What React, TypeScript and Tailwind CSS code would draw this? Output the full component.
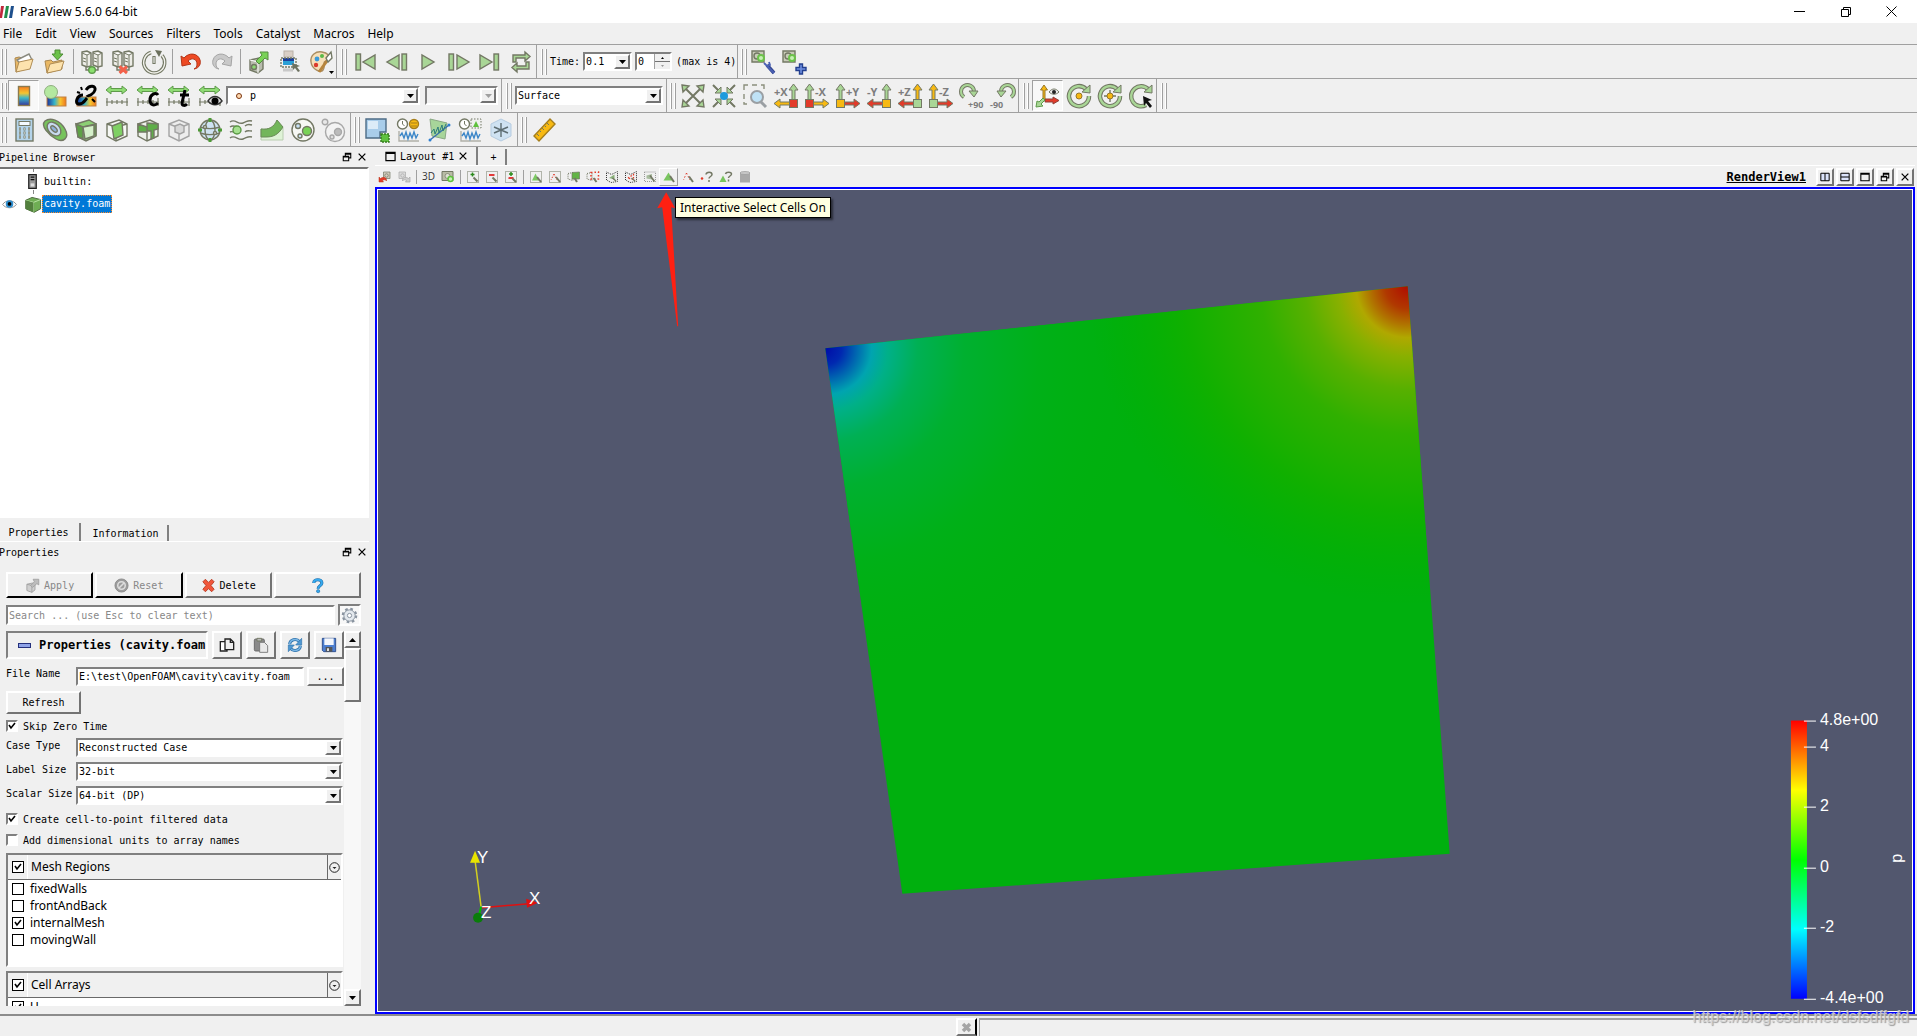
// src/App.tsx
import React from 'react';

const G = '#a9d696';
const S = '#737864';
const R = '#e23b2a';
const Y = '#f7b912';

const sunken =
  'border-2 border-t-[#808080] border-l-[#808080] border-b-white border-r-white';
const raised =
  'border-2 border-t-white border-l-white border-b-[#737373] border-r-[#737373] bg-[#f0f0f0]';
const mono = "font-['DejaVu_Sans_Mono',monospace] text-[10px]";

const Svg = ({
  children,
  size = 24,
}: {
  children: React.ReactNode;
  size?: number;
}) => (
  <svg
    width={size}
    height={size}
    viewBox="0 0 24 24"
    fill="none"
    stroke={S}
    strokeWidth="1.4"
    className="block shrink-0 overflow-visible"
  >
    {children}
  </svg>
);

const icons: Record<string, React.ReactNode> = {
  open: (
    <>
      <path d="M3 8l4-1 3 1v12l-6 2z" fill="#e9b865" stroke="#a98750" strokeWidth="1" />
      <path d="M5 10l12-6 3 6-9 7z" fill="#fff" stroke="#8b8b80" />
      <path d="M4 22l3-10 14-3-3 10z" fill="#fde3ae" stroke="#b08d55" strokeWidth="1" />
    </>
  ),
  save: (
    <>
      <path d="M2 11l6-1 2 2 9-2v9l-15 4z" fill="#e9b865" stroke="#a98750" strokeWidth="1" />
      <path d="M4 23l3-9 14-3-3 9z" fill="#fde3ae" stroke="#b08d55" strokeWidth="1" />
      <path d="M12 0h5v4h3l-5.500 6-5.500-6h3z" fill="#6cc24a" stroke="#4c8a35" strokeWidth="1" />
    </>
  ),
  connect: (
    <>
      <path d="M2 2l5-1 4 2v13l-4 1-5-2zM13 2l5-1 4 2v13l-4 1-5-2z" fill="#ecece6" />
      <path d="M2 3l5 2 4-2M13 3l5 2 4-2" fill="#fff" strokeWidth="1" />
      <path d="M3 8l3 1M3 11l3 1M14 8l3 1M14 11l3 1M7 5v11M18 5v11" strokeWidth="1" />
      <path d="M6 17v3h12v-3" />
      <circle cx="12" cy="20" r="3.300" fill="#8be06e" stroke="#5d9a4a" />
    </>
  ),
  disconnect: (
    <>
      <path d="M2 2l5-1 4 2v13l-4 1-5-2zM13 2l5-1 4 2v13l-4 1-5-2z" fill="#ecece6" />
      <path d="M2 3l5 2 4-2M13 3l5 2 4-2" fill="#fff" strokeWidth="1" />
      <path d="M3 8l3 1M3 11l3 1M14 8l3 1M14 11l3 1M7 5v11M18 5v11" strokeWidth="1" />
      <path d="M6 17v3h12v-3" />
      <path d="M8.500 16.500l7.500 6.500M16 16.500L8.500 23" stroke="#f2614a" strokeWidth="3" />
    </>
  ),
  power: (
    <>
      <path d="M9 2.500A10.500 10.500 0 1 0 20 5.500" strokeWidth="3.600" />
      <path d="M9 2.500A10.500 10.500 0 1 0 20 5.500" stroke="#f2f2ec" strokeWidth="1.400" />
      <path d="M13 0l7 1-3 6z" fill="#6a6f5c" stroke="none" />
      <path d="M12 6v8" strokeWidth="3.200" />
      <path d="M12 7v6" stroke="#fff" strokeWidth="1" />
    </>
  ),
  undo: <path d="M2 6l1 10 9-2-3-3c4-4 9-2 9 3 0 3-1 4-3 5 6-1 7-6 6-9C19 3 10 2 5 8z" fill="#ee4a24" stroke="#b33618" strokeWidth="1" />,
  redo: <path d="M22 6l-1 10-9-2 3-3c-4-4-9-2-9 3 0 3 1 4 3 5-6-1-7-6-6-9C5 3 14 2 19 8z" fill="#c9c9c9" stroke="#a5a5a5" strokeWidth="1" />,
  extract: (
    <>
      <path d="M3 10l9-2 4 2v9l-5 4-8-3z" fill="#b9bcae" />
      <path d="M3 10l8 2v11M11 12l5-2" stroke="#fff" strokeWidth="1" />
      <circle cx="7" cy="17" r="2.500" fill="#8dd873" />
      <path d="M9 11l6-6-2-3h8v8l-3-2-6 6z" fill="#79d257" stroke="#568c42" strokeWidth="1" />
    </>
  ),
  layers: (
    <>
      <rect x="6" y="1" width="9" height="6" fill="#d9cfc6" stroke="#b8b0a6" strokeWidth="1" />
      <rect x="5" y="8" width="11" height="3" fill="#1c3f9a" stroke="none" />
      <rect x="5" y="11" width="11" height="4" fill="#2a9fd6" stroke="none" />
      <path d="M3 8h15v9H3z" strokeDasharray="2 1" />
      <path d="M5 20h10" stroke="#c9c9c9" strokeWidth="3" />
      <path d="M14 13l8 3-3 1 3 4-2 1-3-4-2 2z" fill="#6e7260" stroke="none" />
    </>
  ),
  palette: (
    <>
      <path d="M2 12C1 5 7 1 13 2s8 4 7 7-5 1-5 4 1 4-1 7-11 0-12-8z" fill="#f6dfb8" stroke="#a98d62" />
      <circle cx="8" cy="9" r="2.400" fill="#3a9ad9" stroke="none" />
      <circle cx="13" cy="6" r="2" fill="#5bb947" stroke="none" />
      <circle cx="7" cy="15" r="2.200" fill="#dc3a2c" stroke="none" />
      <path d="M10 22L20 8" stroke="#b6843c" strokeWidth="3" />
      <path d="M17 8l5-6 1 6-4 4z" fill="#fff" />
    </>
  ),
  first: (
    <>
      <rect x="2" y="4" width="4.500" height="16" fill={G} />
      <path d="M21 5v14L9 12z" fill={G} />
    </>
  ),
  prev: (
    <>
      <path d="M14 5v14L2 12z" fill={G} />
      <rect x="17" y="4" width="4.500" height="16" fill={G} />
    </>
  ),
  play: <path d="M6 5v14l12-7z" fill={G} />,
  next: (
    <>
      <rect x="2" y="4" width="4.500" height="16" fill={G} />
      <path d="M10 5v14l12-7z" fill={G} />
    </>
  ),
  last: (
    <>
      <path d="M2 5v14l12-7z" fill={G} />
      <rect x="16" y="4" width="4.500" height="16" fill={G} />
    </>
  ),
  loop: (
    <>
      <path d="M4 12V5h12V2l5 4.500-5 4.500V8H7v4z" fill={G} />
      <path d="M20 12v7H8v3l-5-4.500L8 13v3h9v-4z" fill={G} />
    </>
  ),
  camWrench: (
    <>
      <path d="M0 1h12v11H0z" fill="#c9ccb9" />
      <circle cx="5" cy="6" r="3" />
      <circle cx="9" cy="8" r="3" fill="#c7f0b5" stroke="#6cc24a" strokeWidth="2" />
      <path d="M15 15l7 8" stroke="#31458f" strokeWidth="3.500" />
      <path d="M12 13l3 3 3-1-1-3M15 16l7 7" stroke="#4a60b4" strokeWidth="1.800" />
    </>
  ),
  camPlus: (
    <>
      <path d="M0 1h12v11H0z" fill="#c9ccb9" />
      <circle cx="5" cy="6" r="3" />
      <circle cx="9" cy="8" r="3" fill="#c7f0b5" stroke="#6cc24a" strokeWidth="2" />
      <path d="M16.500 14h3v3.500H23v3h-3.500V24h-3v-3.500H13v-3h3.500z" fill="#6f8fe0" stroke="#24408f" />
    </>
  ),
  colorbar: <rect x="6.500" y="2.500" width="11" height="19" fill="url(#rainbow)" stroke="#8a7a50" />,
  colormap: (
    <>
      <rect x="4" y="13" width="19" height="9" fill="url(#rainbowH)" stroke="#c08040" strokeWidth="1" />
      <circle cx="8" cy="8" r="6.500" fill="#b4e8a0" stroke="#8fae80" strokeWidth="1" />
    </>
  ),
  link: (
    <>
      <rect x="3" y="13" width="19" height="9" fill="url(#rainbowH)" stroke="#c08040" strokeWidth="1" />
      <path d="M12 6c4-6 10-4 9 0s-7 7-8 5M9 11c-6 0-9 9-4 9s6-4 8-6" stroke="#000" strokeWidth="3" />
      <path d="M3 8l3 1M7 3l1 3M18 15l3 3" stroke="#000" strokeWidth="2" />
    </>
  ),
  rescale: (
    <>
      <path d="M1 6l5-4v2.500h11V2l5 4-5 4V7.500H6V10z" fill="#8fdc74" stroke="#5e9a4a" strokeWidth="1" />
      <path d="M1 18h22M2 14v8M7 16v4M12 16v4M17 16v4M22 14v8" strokeWidth="1.200" />
    </>
  ),
  calculator: (
    <>
      <rect x="4" y="1" width="17" height="22" fill="#b4d4ea" />
      <rect x="7" y="3.500" width="11" height="4" fill="#f4faff" strokeWidth="1" />
      <path d="M7 11h2M11.500 11h2M16 11h2M7 15h2M11.500 15h2M16 15h2M7 19h2M11.500 19h2M16 19h2" strokeWidth="3" />
      <path d="M7.500 11h1M12 11h1M16.500 11h1M7.500 15h1M12 15h1M16.500 15h1M7.500 19h1M12 19h1M16.500 19h1" stroke="#fff" strokeWidth="1" />
    </>
  ),
  contour: (
    <>
      <path d="M2 3c5-4 15-1 20 8s-2 14-9 10S-3 8 2 3z" fill="#77c35c" />
      <ellipse cx="11" cy="11" rx="8" ry="5.500" transform="rotate(45 11 11)" fill="#c8daf0" />
      <ellipse cx="11" cy="11" rx="4" ry="2" transform="rotate(45 11 11)" fill="#8fb0da" />
    </>
  ),
  clip: (
    <>
      <path d="M2 6l13-4 7 4v12l-10 5-8-4z" fill="#8ccf74" />
      <path d="M2 6l7 3v12l-5-2zM9 9l13-3v12" fill="#5ea245" />
      <path d="M9 9l11-2v11l-9 3z" fill="#d5f0ca" />
    </>
  ),
  slice: (
    <>
      <path d="M2 6l12-4 8 4v12l-11 5-9-5z" fill="#f6f8f4" />
      <path d="M2 6l9 3 11-3M11 9v14" />
      <path d="M7 8l10-4 1 13-9 4z" fill="#7fd063" />
    </>
  ),
  threshold: (
    <>
      <path d="M2 6l12-4 8 4v12l-11 5-9-5z" fill="#eef1ea" />
      <path d="M2 6l9 3v5H2zM11 5l11 1v5l-4 1v8l-3 1v-8h-4z" fill="#5fae48" />
      <path d="M11 14v9" />
    </>
  ),
  subset: (
    <g stroke="#a3a3a3">
      <path d="M2 6l10-4 10 4v12l-10 5-10-5z" fill="#ededed" />
      <path d="M2 6l10 4 10-4M12 10v13" />
      <path d="M8 8l5-2 4 2v6l-4 2-5-2z" fill="#d8d8d8" />
    </g>
  ),
  glyph: (
    <>
      <circle cx="12" cy="12" r="10" fill="#cfe2f2" />
      <ellipse cx="12" cy="12" rx="5" ry="10" />
      <path d="M2 9c6 2 14 2 20 0M2 15c6 2 14 2 20 0" />
      <path d="M12 0v4M12 20v4M0 12h4M20 12h4" stroke="#4d9a35" strokeWidth="3" />
      <circle cx="7" cy="9" r="1.500" fill="#fff" />
      <circle cx="17" cy="15" r="1.500" fill="#fff" />
    </>
  ),
  stream: (
    <>
      <path d="M1 4c5-4 8 3 13 1s5-3 9-2M1 9c4-3 5 1 7-1M16 8c2-2 4-2 7-1M1 14c4-2 5 3 7 1M16 14c2-2 4-1 7-1M1 20c5-4 8 3 13 1s5-3 9-2" />
      <circle cx="8" cy="12" r="4" fill="#a5e08e" stroke="#5c9a45" />
    </>
  ),
  warp: (
    <>
      <path d="M1 22V11c8 1 14-2 16-9l6 8v12z" fill="#dff3d7" stroke="#b9cdb0" strokeWidth="1" />
      <path d="M1 11c8 1 13-2 16-9l6 7c-5 8-10 10-17 10H1z" fill="#72b65a" stroke="#6a8a58" strokeWidth="1" />
    </>
  ),
  group: (
    <>
      <circle cx="12" cy="12" r="11" fill="#f7f8f4" />
      <circle cx="7" cy="8" r="2.500" fill="#c8e0f4" />
      <circle cx="9" cy="18" r="2" fill="#c8e0f4" />
      <circle cx="16" cy="13" r="4.500" fill="#79d257" />
    </>
  ),
  level: (
    <g stroke="#a8a8a8">
      <circle cx="13" cy="14" r="9.500" fill="#f3f3f3" />
      <circle cx="3" cy="4" r="2.800" fill="#e8e8e8" />
      <circle cx="10" cy="19" r="2" fill="#ddd" />
      <circle cx="16" cy="14" r="3.500" fill="#bbb" />
    </g>
  ),
  selLayout: (
    <>
      <path d="M1 1h20v13h-6v6H1z" fill="#a9cdea" stroke="#4c6b85" />
      <path d="M3 3h10v8H3z" fill="#dcecf8" stroke="none" />
      <rect x="16" y="16" width="8" height="8" fill="#5fc13f" stroke="#347a1e" strokeDasharray="2 1" />
    </>
  ),
  plotGlobal: (
    <>
      <circle cx="6.500" cy="6" r="5" fill="#fff" />
      <path d="M6.500 3v3l2 2" strokeWidth="1" />
      <circle cx="18" cy="6" r="4.500" fill={Y} stroke="#a57e1c" />
      <path d="M15 5h6M15 8h6" stroke="#a57e1c" strokeWidth="1" />
      <path d="M3 13v10h20" stroke="#b0b0a8" />
      <path d="M4 18l2-3 2 5 2-6 2 7 2-6 2 5 2-6 2 6 2-4" stroke="#3b86c8" />
    </>
  ),
  plotLine: (
    <>
      <path d="M3 1l17 4-2 16-13-3z" fill="#a7d59a" stroke="#8aa884" strokeWidth="1" />
      <path d="M3 22L22 7" stroke="#3c6fae" />
      <path d="M4 15l3-4 1 5 3-7 1 6 3-8 1 6 3-7" stroke="#2d7d7c" strokeWidth="1" />
      <circle cx="3" cy="22" r="1.500" fill="#2f7fd0" stroke="none" />
      <circle cx="22" cy="7" r="1.500" fill="#2f7fd0" stroke="none" />
    </>
  ),
  plotSel: (
    <>
      <circle cx="6.500" cy="6" r="5" fill="#fff" />
      <path d="M6.500 3v3l2 2" strokeWidth="1" />
      <rect x="13" y="1" width="10" height="9" strokeDasharray="1.500 1.500" strokeWidth="1" />
      <path d="M18 3l3 6h-6z" fill="#5fc13f" stroke="none" />
      <path d="M3 13v10h20" stroke="#b0b0a8" />
      <path d="M4 18l2-3 2 5 2-6 2 7 2-6 2 5 2-6 2 6 2-4" stroke="#3b86c8" />
    </>
  ),
  probe: (
    <>
      <path d="M2 6l10-5 10 5v12l-10 5-10-5z" fill="#cfe2f2" stroke="#b5cbe0" strokeWidth="1" />
      <path d="M12 5v14M5 9l14 6M19 9L5 15" stroke="#5e6d72" />
    </>
  ),
  ruler: (
    <>
      <path d="M2 18L18 1l5 5L7 23z" fill={Y} stroke="#a57e1c" />
      <path d="M5 16l2 2M8 13l1 1M10 10l2 2M13 8l1 1M15 5l2 2" strokeWidth="1" />
    </>
  ),
  reset: (
    <>
      <path d="M4 4l16 16M20 4L4 20" strokeWidth="2" />
      <path d="M1 1l7 1-6 6zM23 1l-7 1 6 6zM1 23l1-7 6 6zM23 23l-1-7-6 6z" fill={G} />
    </>
  ),
  zoomData: (
    <>
      <path d="M1 1l5 5M23 1l-5 5M1 23l5-5M23 23l-5-5" strokeWidth="2" />
      <path d="M9 9H3l6-6zM15 9h6l-6-6zM9 15H3l6 6zM15 15h6l-6 6z" fill={G} strokeWidth="1" />
      <circle cx="12" cy="12" r="4" fill="#1e9bdc" stroke="none" />
    </>
  ),
  zoomBox: (
    <>
      <path d="M1 6V1h4M9 1h5M18 1h3v4M1 10v5M1 18v2h3" stroke="#8b8f7c" />
      <circle cx="14" cy="13" r="6" fill="#bfe2f6" stroke="#9a9fa3" strokeWidth="2" />
      <path d="M18 18l5 5" stroke="#9a9fa3" strokeWidth="3" />
    </>
  ),
  showAxes: (
    <>
      <path d="M7 15V6H4.500L8 1l3.500 5H9v9" fill={Y} stroke="#96772a" strokeWidth="1" />
      <path d="M9 15h8v-2l6 3.500-6 3.500v-2H9z" fill={R} stroke="#8d4138" strokeWidth="1" />
      <path d="M9 16l-4 4 2 2-7 1 1-6 2 1 4-4z" fill={G} stroke="#5e9a4a" strokeWidth="1" />
      <path d="M13 8c3-4 7-4 10 0-3 3-7 3-10 0z" fill="#eee" strokeWidth="1" />
      <circle cx="18" cy="8" r="2" fill="#222" stroke="none" />
    </>
  ),
  centerAxes: (
    <>
      <path d="M19 5A10 10 0 1 0 22 12" strokeWidth="4.500" />
      <path d="M19 5A10 10 0 1 0 22 12" stroke={G} strokeWidth="2.400" />
      <path d="M15 8l8 1V1z" fill={G} strokeWidth="1" />
      <circle cx="12" cy="12" r="3" fill={Y} stroke="#96772a" strokeWidth="1" />
    </>
  ),
  resetCenter: (
    <>
      <path d="M19 5A10 10 0 1 0 22 12" strokeWidth="4.500" />
      <path d="M19 5A10 10 0 1 0 22 12" stroke={G} strokeWidth="2.400" />
      <path d="M15 8l8 1V1z" fill={G} strokeWidth="1" />
      <path d="M12 6v12M6 12h12" />
      <circle cx="12" cy="12" r="3" fill={Y} stroke="#96772a" strokeWidth="1" />
    </>
  ),
  pickCenter: (
    <>
      <path d="M19 5A10 10 0 1 0 17 21" strokeWidth="4.500" />
      <path d="M19 5A10 10 0 1 0 17 21" stroke={G} strokeWidth="2.400" />
      <path d="M15 8l8 1V1z" fill={G} strokeWidth="1" />
      <path d="M14 12l9 4-4 1 4 5-2 2-4-5-2 3z" fill="#111" stroke="none" />
    </>
  ),
  camUndo: (
    <>
      <path d="M9 2h13v13H9z" fill="#d3cdbf" />
      <circle cx="15" cy="9" r="3.500" />
      <path d="M0 12v10h9l-2-3c3-2 6-2 8 1 1-8-7-9-12-5z" fill={R} stroke="#b33618" strokeWidth="1" />
    </>
  ),
  camRedo: (
    <g stroke="#a8a8a8">
      <path d="M2 2h13v13H2z" fill="#ddd" />
      <circle cx="9" cy="9" r="3.500" />
      <path d="M24 12v10h-9l2-3c-3-2-6-2-8 1-1-8 7-9 12-5z" fill="#ccc" />
    </g>
  ),
  capture: (
    <>
      <path d="M0 1h22v18H0z" fill="#b9bca6" strokeWidth="2" />
      <circle cx="11" cy="10" r="5" fill="#dfe2d2" />
      <circle cx="17" cy="16" r="5" fill="#c7f0b5" stroke="#5fc13f" strokeWidth="3" />
    </>
  ),
  selCells: (
    <>
      <path d="M1 1h22v22H1z" strokeDasharray="2 2" strokeWidth="2" />
      <path d="M11 5l7 14H4z" fill="#7cc862" stroke="none" />
      <path d="M14 12l8 10" strokeWidth="4" />
    </>
  ),
  selPoints: (
    <>
      <path d="M1 1h22v22H1z" strokeDasharray="2 2" strokeWidth="2" />
      <path d="M10 6l6 12M10 6L4 18" stroke={R} strokeDasharray="3 3" strokeWidth="2" />
      <path d="M14 12l8 10" strokeWidth="4" />
    </>
  ),
  frustumCells: (
    <>
      <path d="M0 5l10-2v16L0 16z" strokeDasharray="2 2" strokeWidth="2" />
      <path d="M8 3l15-1v14H8z" fill="#62b446" />
      <path d="M13 14l5 8" strokeWidth="4" />
    </>
  ),
  frustumPoints: (
    <>
      <path d="M0 5l10-2v16L0 16z" strokeDasharray="2 2" strokeWidth="2" />
      <path d="M8 3l15-1v14H8z" stroke={R} strokeWidth="3" strokeDasharray="3 4" />
      <path d="M13 14l6 8" strokeWidth="4" />
    </>
  ),
  polyCells: (
    <>
      <path d="M1 2l10 5 12-6v20l-13 2-9-5z" stroke="#333" strokeDasharray="2 2" strokeWidth="2" />
      <path d="M6 14l11-7v10z" fill="#8ab07a" stroke="none" />
      <path d="M13 14l7 6" strokeWidth="3" />
    </>
  ),
  polyPoints: (
    <>
      <path d="M1 2l10 5 12-6v20l-13 2-9-5z" stroke="#333" strokeDasharray="2 2" strokeWidth="2" />
      <path d="M6 14l11-7v10z" stroke={R} strokeWidth="2.500" strokeDasharray="3 3" />
      <path d="M13 14l7 6" strokeWidth="3" />
    </>
  ),
  selBlock: (
    <>
      <path d="M1 2h22v19H1z" stroke="#999" strokeDasharray="2 2" strokeWidth="2" />
      <path d="M5 9l11-3v11L5 15z" fill="#a8bc9e" stroke="none" />
      <path d="M12 9l9 12" strokeWidth="3.500" />
    </>
  ),
  interCells: (
    <>
      <path d="M11 3l9 16H1z" fill="#79c45f" stroke="none" />
      <path d="M14 10l8 12" strokeWidth="4" />
    </>
  ),
  interPoints: (
    <>
      <path d="M9 4l7 14M9 4L3 18" stroke={R} strokeWidth="2" strokeDasharray="3 4" />
      <path d="M14 11l8 11" strokeWidth="4" />
    </>
  ),
  hoverPoints: (
    <>
      <circle cx="2" cy="15" r="2.500" fill={R} stroke="none" />
      <path d="M10 7c1-6 12-6 12 0 0 4-6 4-6 8M16 18v4" strokeWidth="3" />
    </>
  ),
  hoverCells: (
    <>
      <path d="M6 9l7 13H-1z" fill="#79c45f" stroke="none" />
      <path d="M11 6c1-5 12-5 12 0 0 4-6 4-6 8M17 17v4" strokeWidth="3" />
    </>
  ),
  trash: (
    <>
      <path d="M2 4h20v19H2z" fill="#a9a9a9" stroke="none" />
      <ellipse cx="12" cy="4" rx="10" ry="3" fill="#c9c9c9" stroke="#999" />
    </>
  ),
  float: <path d="M8 9V3h13v11h-5M8 5h13M3 10h13v11H3zM3 12h13" stroke="#000" strokeWidth="2.600" />,
  close: <path d="M4 4l16 16M20 4L4 20" stroke="#000" strokeWidth="3" />,
  maximize: <path d="M2 3h20v18H2zM2 5h20" stroke="#000" strokeWidth="2.600" />,
  splitH: <path d="M2 3h20v18H2zM12 3v18" fill="#dbe3fa" stroke="#000" strokeWidth="2.400" />,
  splitV: <path d="M2 3h20v18H2zM2 12h20" fill="#dbe3fa" stroke="#000" strokeWidth="2.400" />,
  copy: (
    <>
      <path d="M2 7h10v14H2z" fill="#fff" stroke="#222" strokeWidth="2" />
      <path d="M9 3h8l5 5v11H9z" fill="#eee" stroke="#222" strokeWidth="2" />
      <path d="M17 3v5h5" stroke="#222" strokeWidth="2" />
    </>
  ),
  paste: (
    <>
      <rect x="2" y="3" width="15" height="18" rx="2" fill="#8a8a8a" stroke="#666" />
      <path d="M6 2h7v4H6z" fill="#bbb" />
      <path d="M10 8h7l5 5v10H10z" fill="#e9e9e9" stroke="#777" />
    </>
  ),
  reload: (
    <>
      <path d="M4 11c0-7 10-10 15-4M20 13c0 7-10 10-15 4" stroke="#2f73ad" strokeWidth="4.500" />
      <path d="M4 11c0-7 10-10 15-4M20 13c0 7-10 10-15 4" stroke="#7cb8e6" strokeWidth="2" />
      <path d="M22 2v10h-9zM2 22V12h9z" fill="#4f98d2" stroke="#2f73ad" strokeWidth="1" />
    </>
  ),
  disk: (
    <>
      <path d="M2 2h20v20H4l-2-2z" fill="#4d7fd0" stroke="#2d4d8c" />
      <path d="M5 2h14v10H5z" fill="#f4f7fc" stroke="none" />
      <path d="M7 15h10v7H7z" fill="#555" stroke="none" />
      <path d="M9 17h3v4H9z" fill="#ddd" stroke="none" />
    </>
  ),
  apply: (
    <g stroke="#a0a0a0">
      <path d="M3 10l9-2 4 2v9l-5 4-8-3z" fill="#d0d0d0" />
      <path d="M3 10l8 2v11M11 12l5-2" />
      <path d="M9 12l6-6-2-4h9v9l-3-2-7 6z" fill="#bdbdbd" />
    </g>
  ),
  deny: (
    <>
      <circle cx="12" cy="12" r="10.500" fill="#9d9d9d" stroke="#888" />
      <circle cx="12" cy="12" r="6" stroke="#ddd" strokeWidth="2.500" />
      <path d="M8 16l8-8" stroke="#ddd" strokeWidth="2.500" />
    </>
  ),
  cross: <path d="M3 6l4-4 5 5 5-5 4 4-5 6 5 6-4 4-5-5-5 5-4-4 5-6z" fill="#f0563a" stroke="#b53a22" />,
  help: (
    <>
      <path d="M6 8c0-7 13-7 13 0 0 5-6 4-6 9" stroke="#2770a8" strokeWidth="5" />
      <path d="M6 8c0-7 13-7 13 0 0 5-6 4-6 9" stroke="#35a9ee" strokeWidth="3" />
      <circle cx="13" cy="21" r="2.600" fill="#35a9ee" stroke="#2770a8" strokeWidth="1" />
    </>
  ),
  gear: (
    <>
      <circle cx="12" cy="12" r="9" stroke="#8a94a0" strokeWidth="4" strokeDasharray="3.500 3.570" />
      <circle cx="12" cy="12" r="8" fill="#e4e9ee" stroke="#8a94a0" />
      <circle cx="12" cy="12" r="3" fill="#fff" stroke="#8a94a0" />
    </>
  ),
  cube: (
    <>
      <path d="M1 6l9-4 12 3v13l-9 5-12-5z" fill="#6fae54" stroke="#4f6c40" />
      <path d="M1 6l11 3 10-4M12 9v14" stroke="#b6e2a2" />
      <path d="M1 6l11 3v14L1 18z" fill="#52803d" stroke="none" />
    </>
  ),
  server: (
    <>
      <path d="M6 1h12v22H6z" fill="#9a9a9a" stroke="#222" strokeWidth="2" />
      <path d="M9 5h6M9 9h6" stroke="#111" strokeWidth="2" />
      <path d="M9 15h6v5H9z" fill="#ddd" stroke="none" />
    </>
  ),
  eye: (
    <>
      <path d="M1 12c5-8 17-8 22 0-5 7-17 7-22 0z" fill="#fff" stroke="#888" />
      <circle cx="12" cy="11" r="6" fill="#2f8fd0" stroke="none" />
      <circle cx="12" cy="11" r="3" fill="#000" stroke="none" />
    </>
  ),
};

icons.rescaleCustom = (
  <>
    {icons.rescale}
    <path d="M22 11c-2-3-8-1-8 5s5 6 8 3" stroke="#000" strokeWidth="3" />
  </>
);
icons.rescaleTime = (
  <>
    {icons.rescale}
    <path d="M18 6l-3 13c0 3 3 3 5 1M13 11h9" stroke="#000" strokeWidth="3" />
  </>
);
icons.rescaleVisible = (
  <>
    {icons.rescale}
    <path d="M10 17c4-6 10-6 14 0-4 5-10 5-14 0z" fill="#ddd" stroke="#333" />
    <circle cx="17" cy="17" r="3.500" fill="#000" stroke="none" />
  </>
);

const selDashes = <path d="M1 1h22v22H1z" strokeDasharray="2 2" strokeWidth="2" />;
icons.addSel = (
  <>
    {selDashes}
    <path d="M11 3v8M7 7h8" stroke="#2d8a1c" strokeWidth="3" />
    <path d="M13 13l8 8" strokeWidth="4" />
  </>
);
icons.subSel = (
  <>
    {selDashes}
    <path d="M6 8h11" stroke="#e02020" strokeWidth="3.500" />
    <path d="M13 13l8 8" strokeWidth="4" />
  </>
);
icons.toggleSel = (
  <>
    {selDashes}
    <path d="M12 2v8M8 6h8" stroke="#2d8a1c" strokeWidth="3" />
    <path d="M7 14h10" stroke="#e02020" strokeWidth="3.500" />
    <path d="M15 15l7 7" strokeWidth="4" />
  </>
);

// One camera axis button: arrow up on one side, arrow sideways along the bottom
const AxisIcon = ({
  text,
  left,
  up,
  side,
  box,
}: {
  text: string;
  left?: boolean;
  up: string;
  side: string;
  box: string;
}) => (
  <Svg>
    <g transform={left ? 'translate(24 0) scale(-1 1)' : undefined} strokeWidth="1">
      <path d="M3 16V6H0l4.500-6L9 6H6v10z" fill={up} />
      <path d="M8 18h10v-3l6 4.500-6 4.500v-3H8z" fill={side} />
      <rect x="0.500" y="15.500" width="8" height="8" fill={box} />
    </g>
    <text
      x={left ? 0 : 10}
      y="12"
      fill="#7d7d7d"
      stroke="none"
      fontSize="11"
      fontWeight="bold"
      fontFamily="Open Sans, sans-serif"
    >
      {text}
    </text>
  </Svg>
);

const RotateIcon = ({ text, flip }: { text: string; flip?: boolean }) => (
  <Svg>
    <g transform={flip ? 'translate(24 0) scale(-1 1)' : undefined}>
      <path d="M4 13A6.500 6.500 0 1 1 14 7" strokeWidth="4" />
      <path d="M4 13A6.500 6.500 0 1 1 14 7" stroke={G} strokeWidth="2" />
      <path d="M9 7h9l-4 6z" fill={G} strokeWidth="1" />
    </g>
    <text
      x={flip ? -1 : 8}
      y="24"
      fill="#7d7d7d"
      stroke="none"
      fontSize="9"
      fontWeight="bold"
      fontFamily="Open Sans, sans-serif"
    >
      {text}
    </text>
  </Svg>
);

const Tool = ({
  name,
  children,
  on,
}: {
  name: string;
  children?: React.ReactNode;
  on?: boolean;
}) => (
  <button
    aria-label={name}
    className={`flex h-[31px] w-[31px] shrink-0 items-center justify-center ${
      on ? 'border border-t-[#a0a0a0] border-l-[#a0a0a0] border-r-white border-b-white bg-[#f8f8f8]' : ''
    }`}
  >
    {children || <Svg>{icons[name]}</Svg>}
  </button>
);

const Tools = ({ names }: { names: string[] }) => (
  <>
    {names.map((n) => (
      <Tool key={n} name={n} />
    ))}
  </>
);

const Sep = () => (
  <div className="flex w-[6px] shrink-0 justify-center">
    <div className="h-[25px] w-px bg-[#a0a0a0]" />
  </div>
);

const Group = ({
  children,
  first,
  open,
  tight,
}: {
  children?: React.ReactNode;
  first?: boolean;
  open?: boolean;
  tight?: boolean;
}) => (
  <div
    className={`flex h-full shrink-0 items-center ${
      open ? '' : 'border-r border-[#a0a0a0]'
    }`}
  >
    <div
      className={`flex shrink-0 gap-[2px] ${
        first ? 'w-[8px] pl-px' : tight ? 'w-[10px] pl-[3px]' : 'w-[13px] pl-[4px]'
      }`}
    >
      <div className="h-[26px] w-[2px] border-r border-[#a0a0a0] bg-white" />
      <div className="h-[26px] w-[2px] border-r border-[#a0a0a0] bg-white" />
    </div>
    {children}
  </div>
);

const ToolRow = ({ children }: { children: React.ReactNode }) => (
  <div className="flex h-[34px] shrink-0 items-center border-b border-[#a0a0a0]">
    {children}
  </div>
);

const Arrow = ({ up, light }: { up?: boolean; light?: boolean }) => (
  <svg width="7" height="4" viewBox="0 0 7 4">
    <path d={up ? 'M0 4h7L3.500 0z' : 'M0 0h7L3.500 4z'} fill={light ? '#a0a0a0' : '#000'} />
  </svg>
);

const Combo = ({
  label,
  value,
  className,
  disabled,
  id,
  pad = 'pl-px',
}: {
  label: string;
  value: string;
  className: string;
  disabled?: boolean;
  id?: string;
  pad?: string;
}) => (
  <div className={`relative h-[19px] ${sunken} ${disabled ? 'bg-[#f0f0f0]' : 'bg-white'} ${className}`}>
    <select
      id={id}
      aria-label={label}
      disabled={disabled}
      className={`${mono} block h-full w-full appearance-none leading-[15px] text-black ${pad}`}
    >
      <option>{value}</option>
    </select>
    <span
      className={`${raised} pointer-events-none absolute top-0 right-0 flex h-full w-[16px] items-center justify-center`}
    >
      <Arrow light={disabled} />
    </span>
  </div>
);

const Check = ({
  id,
  checked,
  flat,
}: {
  id: string;
  checked?: boolean;
  flat?: boolean;
}) => (
  <span className="relative block h-[12px] w-[12px] shrink-0">
    <input
      id={id}
      type="checkbox"
      defaultChecked={checked}
      className={`peer absolute inset-0 appearance-none bg-white ${
        flat ? 'border border-black' : sunken
      }`}
    />
    <svg
      viewBox="0 0 12 12"
      className="pointer-events-none absolute inset-0 hidden peer-checked:block"
    >
      <path d="M3 5l2 3 4-5" fill="none" stroke="#000" strokeWidth="1.600" />
    </svg>
  </span>
);

const DockTitle = ({ title }: { title: string }) => (
  <div className="flex h-[20px] shrink-0 items-center justify-between pr-[2px]">
    <h2 className={`${mono} -ml-px`}>{title}</h2>
    <div className="flex gap-[5px]">
      <button aria-label="Float">
        <Svg size={10}>{icons.float}</Svg>
      </button>
      <button aria-label="Close">
        <Svg size={10}>{icons.close}</Svg>
      </button>
    </div>
  </div>
);

const ActionButton = ({
  icon,
  text,
  disabled,
}: {
  icon: string;
  text?: string;
  disabled?: boolean;
}) => (
  <button
    aria-label={text || 'Help'}
    disabled={disabled}
    className={`${raised} ${mono} flex flex-1 items-center justify-center gap-[4px] ${
      disabled ? 'border-r-black border-b-black text-[#888]' : ''
    }`}
  >
    <Svg size={15}>{icons[icon]}</Svg>
    {text}
  </button>
);

const ArrayHeader = ({ id, text }: { id: string; text: string }) => (
  <div className="flex h-[25px] items-center border-b border-[#696969] bg-[#f0f0f0] pl-[4px]">
    <Check id={id} checked flat />
    <label
      htmlFor={id}
      className="ml-[3px] flex h-full flex-1 items-center border-l border-white pl-[3px] text-[12px]"
    >
      {text}
    </label>
    <button
      aria-label={`${text} options`}
      className="flex h-full w-[14px] items-center justify-center border-l border-[#696969]"
    >
      <svg width="11" height="11" viewBox="0 0 11 11">
        <circle cx="5.500" cy="5.500" r="4.800" fill="none" stroke="#222" />
        <path d="M3.500 5h4l-2 2z" fill="#222" />
      </svg>
    </button>
  </div>
);

const regions = [
  { name: 'fixedWalls', on: false },
  { name: 'frontAndBack', on: false },
  { name: 'internalMesh', on: true },
  { name: 'movingWall', on: false },
];

const options = [
  { label: 'Case Type', value: 'Reconstructed Case' },
  { label: 'Label Size', value: '32-bit' },
  { label: 'Scalar Size', value: '64-bit (DP)' },
];

const ticks = [
  { y: 530, text: '4.8e+00' },
  { y: 556, text: '4' },
  { y: 616, text: '2' },
  { y: 677, text: '0' },
  { y: 737, text: '-2' },
  { y: 808, text: '-4.4e+00' },
];

const Sidebar = () => (
  <aside className="flex w-[369px] shrink-0 flex-col">
    <DockTitle title="Pipeline Browser" />
    <div className="min-h-0 flex-1 border-t-2 border-r-2 border-b border-t-[#737373] border-r-white border-b-white bg-white">
      <div className="ml-[33px] h-[3px] w-px bg-[#888]" />
      <div className={`${mono} flex h-[18px] items-center pl-[25px]`}>
        <Svg size={15}>{icons.server}</Svg>
        <span className="ml-[4px]">builtin:</span>
      </div>
      <div className="ml-[33px] h-[4px] w-px bg-[#888]" />
      <div className={`${mono} flex h-[20px] items-center pl-[2px]`}>
        <Svg size={15}>{icons.eye}</Svg>
        <span className="ml-[8px]">
          <Svg size={17}>{icons.cube}</Svg>
        </span>
        <span className="h-[18px] border border-dotted border-[#ff8a28] bg-[#0078d7] px-px leading-[16px] text-white">
          cavity.foam
        </span>
      </div>
    </div>

    <div className={`${mono} mt-[6px] flex h-[18px] items-end border-b border-white`}>
      <button className="h-[18px] w-[81px] border-r-2 border-[#808080] pr-[2px]">Properties</button>
      <button className="h-[16px] w-[88px] border-r-2 border-[#808080] pl-[3px]">Information</button>
    </div>
    <DockTitle title="Properties" />

    <div className="mt-[10px] mr-[8px] ml-[6px] flex h-[26px] gap-[2px]">
      <ActionButton icon="apply" text="Apply" disabled />
      <ActionButton icon="deny" text="Reset" disabled />
      <ActionButton icon="cross" text="Delete" />
      <ActionButton icon="help" />
    </div>

    <div className="mt-[6px] mr-[8px] ml-[6px] flex h-[22px] items-center gap-[3px]">
      <input
        aria-label="Search"
        placeholder="Search ... (use Esc to clear text)"
        className={`${mono} ${sunken} h-[20px] min-w-0 flex-1 bg-white pl-px placeholder:text-[#888]`}
      />
      <button aria-label="Advanced" className={`${sunken} flex h-[22px] w-[23px] items-center justify-center bg-[#f8f8f8]`}>
        <Svg size={17}>{icons.gear}</Svg>
      </button>
    </div>

    <div className="mt-[5px] mr-[8px] mb-[8px] ml-[6px] flex h-[375px]">
      <div className="flex min-w-0 flex-1 flex-col overflow-hidden">
        <div className="flex h-[28px] shrink-0 gap-[4px]">
          <button
            className={`${sunken} flex min-w-0 flex-1 items-center gap-[8px] pl-[10px] font-['DejaVu_Sans_Mono',monospace] text-[12px] font-bold whitespace-nowrap`}
          >
            <span className="h-[5px] w-[13px] shrink-0 border border-[#24307c] bg-[#8fa3e8]" />
            Properties (cavity.foam
          </button>
          {['copy', 'paste', 'reload', 'disk'].map((n) => (
            <button key={n} aria-label={n} className={`${raised} flex w-[30px] shrink-0 items-center justify-center`}>
              <Svg size={16}>{icons[n]}</Svg>
            </button>
          ))}
        </div>
        <div className={`${mono} mt-[8px] flex h-[20px] shrink-0`}>
          <label htmlFor="file" className="w-[70px] leading-[13px]">
            File Name
          </label>
          <input
            id="file"
            defaultValue="E:\test\OpenFOAM\cavity\cavity.foam"
            className={`${sunken} mr-[3px] h-[19px] min-w-0 flex-1 bg-white pl-px`}
          />
          <button className={`${raised} h-[19px] w-[37px] leading-[13px]`}>...</button>
        </div>
        <button className={`${raised} ${mono} mt-[4px] h-[23px] w-[75px] shrink-0`}>Refresh</button>
        <div className={`${mono} mt-[5px] flex h-[14px] shrink-0 items-center gap-[5px]`}>
          <Check id="skip" checked />
          <label htmlFor="skip">Skip Zero Time</label>
        </div>
        <div className="mt-[5px] flex shrink-0 flex-col gap-[5px]">
          {options.map((o) => (
            <div key={o.label} className={`${mono} flex h-[19px]`}>
              <label htmlFor={o.label} className="w-[70px] leading-[15px]">
                {o.label}
              </label>
              <Combo id={o.label} label={o.label} value={o.value} className="mr-px flex-1" />
            </div>
          ))}
        </div>
        <div className={`${mono} mt-[6px] flex h-[16px] shrink-0 items-center gap-[5px]`}>
          <Check id="c2p" checked />
          <label htmlFor="c2p">Create cell-to-point filtered data</label>
        </div>
        <div className={`${mono} mt-[5px] flex h-[16px] shrink-0 items-center gap-[5px]`}>
          <Check id="units" />
          <label htmlFor="units">Add dimensional units to array names</label>
        </div>
        <div className={`${sunken} mt-[5px] mr-px h-[114px] shrink-0 bg-white`}>
          <ArrayHeader id="mesh" text="Mesh Regions" />
          {regions.map((r) => (
            <div key={r.name} className="flex h-[17px] items-center gap-[6px] pl-[4px] text-[12px]">
              <Check id={r.name} checked={r.on} flat />
              <label htmlFor={r.name}>{r.name}</label>
            </div>
          ))}
        </div>
        <div className={`${sunken} mt-[4px] mr-px h-[114px] shrink-0 bg-white`}>
          <ArrayHeader id="cells" text="Cell Arrays" />
          <div className="flex h-[17px] items-center gap-[6px] pl-[4px] text-[12px]">
            <Check id="U" checked flat />
            <label htmlFor="U">U</label>
          </div>
        </div>
      </div>
      <div className="flex w-[17px] shrink-0 flex-col bg-[#f8f8f8]">
        <button aria-label="Scroll up" className={`${raised} flex h-[17px] items-center justify-center`}>
          <Arrow up />
        </button>
        <div className={`${raised} h-[54px]`} />
        <div className="flex-1" />
        <button aria-label="Scroll down" className={`${raised} flex h-[17px] items-center justify-center`}>
          <Arrow />
        </button>
      </div>
    </div>
  </aside>
);

const Scene = () => (
  <svg viewBox="0 0 1533 820" className="absolute inset-0 h-full w-full">
    <defs>
      <radialGradient id="low" gradientUnits="userSpaceOnUse" cx="447" cy="158" r="330">
        <stop offset="0" stopColor="#000ca8" />
        <stop offset="0.05" stopColor="#0028b0" />
        <stop offset="0.09" stopColor="#0060b0" />
        <stop offset="0.14" stopColor="#00a4b0" />
        <stop offset="0.19" stopColor="#00b088" />
        <stop offset="0.28" stopColor="#00b054" />
        <stop offset="0.42" stopColor="#00b030" />
        <stop offset="0.65" stopColor="#00b018" />
        <stop offset="1" stopColor="#00b00e" stopOpacity="0" />
      </radialGradient>
      <radialGradient id="high" gradientUnits="userSpaceOnUse" cx="1029" cy="96" r="320">
        <stop offset="0" stopColor="#b00c00" />
        <stop offset="0.07" stopColor="#b03800" />
        <stop offset="0.12" stopColor="#b07400" />
        <stop offset="0.16" stopColor="#b0a800" />
        <stop offset="0.22" stopColor="#88b000" />
        <stop offset="0.32" stopColor="#58b000" />
        <stop offset="0.46" stopColor="#30b000" />
        <stop offset="0.7" stopColor="#10b000" />
        <stop offset="1" stopColor="#00b000" stopOpacity="0" />
      </radialGradient>
      <linearGradient id="jet" x1="0" y1="0" x2="0" y2="1">
        <stop offset="0" stopColor="#f00" />
        <stop offset="0.25" stopColor="#ff0" />
        <stop offset="0.5" stopColor="#0f0" />
        <stop offset="0.75" stopColor="#0ff" />
        <stop offset="1" stopColor="#00f" />
      </linearGradient>
    </defs>
    <path d="M447 158L1029 96l42 567-547 40z" fill="#00b00e" />
    <path d="M447 158L1029 96l42 567-547 40z" fill="url(#low)" />
    <path d="M447 158L1029 96l42 567-547 40z" fill="url(#high)" />

    <path d="M103 716L97 670" stroke="#d2cf20" strokeWidth="1.500" />
    <path d="M97 660l5 12h-10z" fill="#e8e400" />
    <path d="M103 717l48-4" stroke="#e01010" strokeWidth="1.500" />
    <path d="M160 712l-11 5-1-9z" fill="#e01010" />
    <path d="M103 716l-2 8" stroke="#00c000" strokeWidth="2" />
    <circle cx="100" cy="727" r="5" fill="#0a7d0a" />

    <g fill="#fff" fontFamily="Liberation Sans, sans-serif" fontSize="17">
      <text x="99" y="672">Y</text>
      <text x="151" y="713">X</text>
      <text x="103" y="727">Z</text>
    </g>

    <rect x="1412" y="530" width="16" height="278" fill="url(#jet)" />
    <g fill="#fff" fontFamily="Liberation Sans, sans-serif" fontSize="16">
      {ticks.map((t) => (
        <React.Fragment key={t.text}>
          <rect x="1425" y={t.y} width="12" height="1" />
          <text x="1441" y={t.y + 4}>
            {t.text}
          </text>
        </React.Fragment>
      ))}
      <text x="1523" y="672" transform="rotate(-90 1523 672)">
        p
      </text>
    </g>

    <path d="M288 2l9 16-4-1 7 119h-1L284 17l-5 1z" fill="#ff2012" />
  </svg>
);

const viewTools = [
  ['camUndo', 'camRedo'],
  ['3D', 'capture'],
  ['addSel', 'subSel', 'toggleSel'],
  [
    'selCells',
    'selPoints',
    'frustumCells',
    'frustumPoints',
    'polyCells',
    'polyPoints',
    'selBlock',
    'interCells',
    'interPoints',
    'hoverPoints',
    'hoverCells',
    'trash',
  ],
];

const RenderPanel = () => (
  <main className="ml-[6px] flex min-w-0 flex-1 flex-col pr-[2px]">
    <div className={`${mono} flex h-[19px] shrink-0 items-end border-b border-white`}>
      <div className="flex h-[18px] w-[103px] items-center gap-[4px] border-r-2 border-[#808080] pl-[10px]">
        <Svg size={11}>{icons.maximize}</Svg>
        <span>Layout #1</span>
        <button aria-label="Close layout">
          <Svg size={10}>{icons.close}</Svg>
        </button>
      </div>
      <button className="h-[16px] w-[29px] border-r-2 border-[#808080] pl-[4px]">+</button>
    </div>
    <div className="flex h-[21px] shrink-0 items-center">
      {viewTools.map((set, i) => (
        <React.Fragment key={set[0]}>
          {i > 0 && (
            <div className="flex w-[6px] justify-center">
              <div className="h-[14px] w-px bg-[#a0a0a0]" />
            </div>
          )}
          {set.map((n) => (
            <button
              key={n}
              aria-label={n}
              className={`flex h-[18px] w-[19px] shrink-0 items-center justify-center font-['Open_Sans',sans-serif] text-[10px] text-[#333] ${
                n === 'interCells'
                  ? 'border border-t-white border-l-white border-r-[#a0a0a0] border-b-[#a0a0a0]'
                  : ''
              }`}
            >
              {n === '3D' ? '3D' : <Svg size={12}>{icons[n]}</Svg>}
            </button>
          ))}
        </React.Fragment>
      ))}
      <a
        href="#"
        className="ml-auto font-['DejaVu_Sans_Mono',monospace] text-[12px] font-bold underline"
      >
        RenderView1
      </a>
      <div className="mr-px ml-[10px] flex gap-[2px]">
        {['splitH', 'splitV', 'maximize', 'float', 'close'].map((n) => (
          <button key={n} aria-label={n} className={`${raised} flex h-[18px] w-[18px] items-center justify-center`}>
            <Svg size={10}>{icons[n]}</Svg>
          </button>
        ))}
      </div>
    </div>
    <div className="relative min-h-0 flex-1 border-2 border-[#0000ff] bg-[#52576e]">
      <div className="relative h-full w-full border border-white">
        <Scene />
        <div
          role="tooltip"
          className="absolute top-[7px] left-[297px] h-[21px] border border-black bg-[#ffffe1] px-[4px] text-[12px] leading-[19px] whitespace-nowrap shadow-[2px_2px_2px_rgba(0,0,0,0.5)]"
        >
          Interactive Select Cells On
        </div>
      </div>
    </div>
  </main>
);

export default function App() {
  return (
    <div className="relative flex h-screen flex-col overflow-hidden bg-[#f0f0f0] font-['Noto_Sans',sans-serif] text-black">
      <svg width="0" height="0" className="absolute">
        <linearGradient id="rainbow" x1="0" y1="0" x2="0" y2="1">
          <stop offset="0" stopColor="#f57c1f" />
          <stop offset="0.35" stopColor="#f5c531" />
          <stop offset="0.6" stopColor="#3fb8c8" />
          <stop offset="1" stopColor="#33349c" />
        </linearGradient>
        <linearGradient id="rainbowH">
          <stop offset="0" stopColor="#1c2f9a" />
          <stop offset="0.4" stopColor="#37b4c8" />
          <stop offset="0.7" stopColor="#f7c52e" />
          <stop offset="1" stopColor="#f0761c" />
        </linearGradient>
      </svg>

      <header className="flex h-[23px] shrink-0 items-center bg-white text-[12px]">
        <svg width="15" height="12" viewBox="0 0 15 12">
          <path d="M0 12V8l1-8h3L2 12z" fill="#c0283c" />
          <path d="M4 12L6 0h3L7 12z" fill="#1f8f4a" />
          <path d="M9 12l2-12h3l-2 12z" fill="#1d4f8c" />
        </svg>
        <h1 className="ml-[5px]">ParaView 5.6.0 64-bit</h1>
        <div className="ml-auto flex pr-[20px]">
          <button aria-label="Minimize" className="mr-[35px]">
            <svg width="11" height="11" viewBox="0 0 11 11">
              <path d="M0 5.500h11" stroke="#000" />
            </svg>
          </button>
          <button aria-label="Restore" className="mr-[35px]">
            <svg width="11" height="11" viewBox="0 0 11 11" fill="none" stroke="#000">
              <path d="M1.500 3.500h7v7h-7zM3.500 3V1.500h7v7H9" />
            </svg>
          </button>
          <button aria-label="Close window">
            <svg width="11" height="11" viewBox="0 0 11 11">
              <path d="M0.500 0.500l10 10M10.500 0.500l-10 10" stroke="#000" />
            </svg>
          </button>
        </div>
      </header>

      <nav className="flex h-[22px] shrink-0 items-center gap-[13px] border-b border-[#a0a0a0] pl-[3px] text-[12px]">
        {['File', 'Edit', 'View', 'Sources', 'Filters', 'Tools', 'Catalyst', 'Macros', 'Help'].map((m) => (
          <button key={m}>{m}</button>
        ))}
      </nav>

      <ToolRow>
        <Group first>
          <Tools names={['open', 'save']} />
          <Sep />
          <Tools names={['connect', 'disconnect', 'power']} />
          <Sep />
          <Tools names={['undo', 'redo']} />
          <Sep />
          <Tools names={['extract', 'layers']} />
          <Tool name="palette">
            <span className="relative">
              <Svg>{icons.palette}</Svg>
              <svg width="5" height="3" viewBox="0 0 5 3" className="absolute -right-[1px] bottom-0">
                <path d="M0 0h5L2.500 3z" fill="#000" />
              </svg>
            </span>
          </Tool>
        </Group>
        <Group>
          <Tools names={['first', 'prev', 'play', 'next', 'last', 'loop']} />
        </Group>
        <Group>
          <span className={mono}>Time:</span>
          <Combo label="Time" value="0.1" className="ml-[3px] w-[49px]" />
          <div className={`${sunken} relative ml-[3px] h-[19px] w-[37px] bg-white`}>
            <input aria-label="Time step" defaultValue="0" className={`${mono} block h-full w-full pl-px`} />
            <div className="absolute top-0 right-0 flex h-full w-[16px] flex-col border-l border-[#a0a0a0] bg-[#f0f0f0]">
              <button aria-label="Step up" className="flex flex-1 items-center justify-center border-b border-[#737373]">
                <svg width="3" height="2" viewBox="0 0 3 2">
                  <path d="M0 2h3L1.500 0z" />
                </svg>
              </button>
              <button aria-label="Step down" className="flex flex-1 items-center justify-center">
                <svg width="3" height="2" viewBox="0 0 3 2">
                  <path d="M0 0h3L1.500 2z" fill="#999" />
                </svg>
              </button>
            </div>
          </div>
          <span className={`${mono} ml-[4px] pr-px`}>(max is 4)</span>
        </Group>
        <Group open tight>
          <Tools names={['camWrench', 'camPlus']} />
        </Group>
      </ToolRow>

      <ToolRow>
        <Group first>
          <Tool name="colorbar" on />
          <Tools names={['colormap', 'link', 'rescale', 'rescaleCustom', 'rescaleTime', 'rescaleVisible']} />
          <div className="relative ml-px">
            <Combo label="Coloring" value="p" className="w-[194px]" pad="pl-[22px]" />
            <span className="pointer-events-none absolute top-[7px] left-[10px] h-[6px] w-[6px] rounded-full border border-[#7a3510] bg-[#ffd9b0]" />
          </div>
          <Combo label="Component" value="" disabled className="mr-[3px] ml-[5px] w-[73px]" />
        </Group>
        <Group>
          <Combo label="Representation" value="Surface" className="mr-[3px] w-[148px]" />
        </Group>
        <Group tight>
          <Tools names={['reset', 'zoomData', 'zoomBox']} />
          <Tool name="+X">
            <AxisIcon text="+X" left up={G} side={Y} box={R} />
          </Tool>
          <Tool name="-X">
            <AxisIcon text="-X" up={G} side={Y} box={R} />
          </Tool>
          <Tool name="+Y">
            <AxisIcon text="+Y" up={G} side={R} box={Y} />
          </Tool>
          <Tool name="-Y">
            <AxisIcon text="-Y" left up={G} side={R} box={Y} />
          </Tool>
          <Tool name="+Z">
            <AxisIcon text="+Z" left up={Y} side={R} box={G} />
          </Tool>
          <Tool name="-Z">
            <AxisIcon text="-Z" up={Y} side={R} box={G} />
          </Tool>
          <Tool name="Rotate +90">
            <RotateIcon text="+90" />
          </Tool>
          <Tool name="Rotate -90">
            <RotateIcon text="-90" flip />
          </Tool>
        </Group>
        <Group>
          <Tool name="showAxes" on />
          <Tools names={['centerAxes', 'resetCenter', 'pickCenter']} />
        </Group>
        <Group open />
      </ToolRow>

      <ToolRow>
        <Group first>
          <Tools
            names={[
              'calculator',
              'contour',
              'clip',
              'slice',
              'threshold',
              'subset',
              'glyph',
              'stream',
              'warp',
              'group',
              'level',
            ]}
          />
          <span className="w-px" />
        </Group>
        <Group tight>
          <Tools names={['selLayout', 'plotGlobal', 'plotLine', 'plotSel', 'probe']} />
          <span className="w-px" />
        </Group>
        <Group open tight>
          <Tools names={['ruler']} />
        </Group>
      </ToolRow>

      <div className="flex min-h-0 flex-1">
        <Sidebar />
        <RenderPanel />
      </div>

      <footer className="flex h-[22px] shrink-0 items-end gap-[2px] border-t-2 border-[#8c8c8c] pl-[956px]">
        <button aria-label="Abort" className={`${raised} flex h-[18px] w-[21px] items-center justify-center border-r-black`}>
          <svg width="11" height="11" viewBox="0 0 11 11">
            <path d="M2 2l7 7M9 2L2 9" stroke="#a5a5a5" strokeWidth="3.500" />
          </svg>
        </button>
        <div className="h-[18px] flex-1 border-t-2 border-l border-[#a0a0a0]" />
      </footer>

      <span className="absolute right-[8px] bottom-[8px] font-['Liberation_Sans',sans-serif] text-[16px] leading-[22px] text-[#d8d8d8]/80 [text-shadow:1px_1px_1px_#999]">
        https://blog.csdn.net/dsfsdffgfd
      </span>
    </div>
  );
}
